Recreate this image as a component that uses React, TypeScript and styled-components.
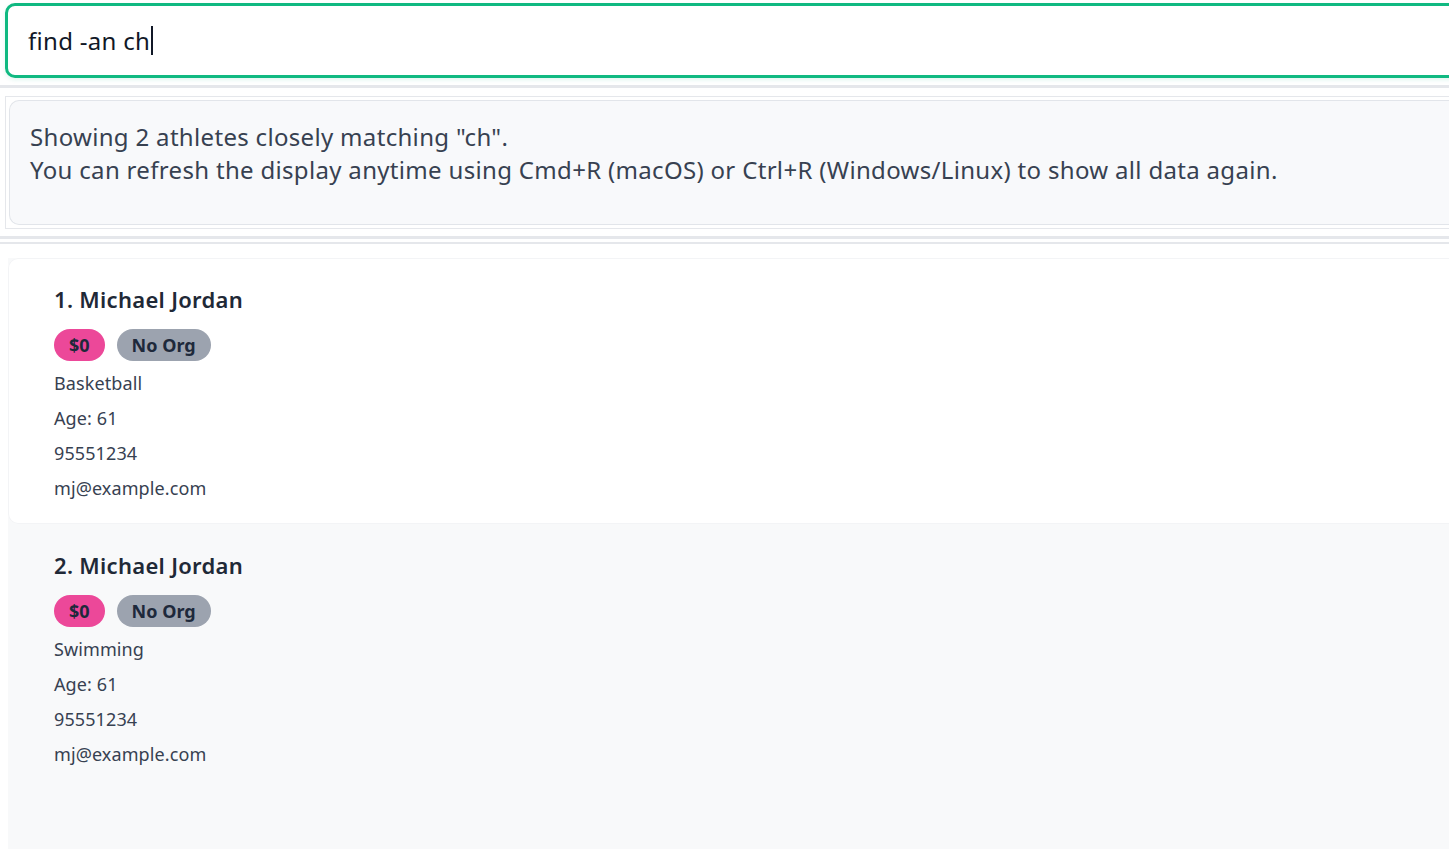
import React from "react";
import styled, { createGlobalStyle } from "styled-components";

const Global = createGlobalStyle`
  html, body {
    margin: 0;
    padding: 0;
    background: #ffffff;
    overflow: hidden;
  }
  body {
    font-family: "Noto Sans", "Open Sans", sans-serif;
    color: #1f2937;
  }
`;

const Page = styled.div`
  width: 1470px;
  height: 849px;
  display: flex;
  flex-direction: column;
`;

const CommandBox = styled.div`
  margin: 3px 0 0 5px;
  height: 69px;
  border: 3px solid #10b981;
  border-radius: 10px;
  background: #ffffff;
  box-shadow: 0 2px 4px rgba(16, 185, 129, 0.12);
  display: flex;
  align-items: center;
  padding-left: 20px;
  font-size: 24px;
  letter-spacing: 0.3px;
  color: #111827;
`;

const Caret = styled.span`
  display: inline-block;
  width: 2px;
  height: 29px;
  background: #111827;
  margin-left: 1px;
  vertical-align: middle;
`;

const Divider = styled.div<{ $top: number; $bottom: number; $thick?: number }>`
  height: ${(p) => p.$thick ?? 3}px;
  margin-top: ${(p) => p.$top}px;
  margin-bottom: ${(p) => p.$bottom}px;
  background: #e5e7eb;
`;

const ResultOuter = styled.div`
  margin-left: 5px;
  border: 1px solid #e5e7eb;
  border-right: none;
  padding: 3px 0 3px 3px;
  background: #ffffff;
`;

const ResultInner = styled.div`
  height: 84px;
  border: 1px solid #e2e5ea;
  border-right: none;
  border-radius: 10px 0 0 10px;
  background: #f8f9fb;
  padding: 19px 20px 20px 20px;
  font-size: 24px;
  line-height: 33px;
  letter-spacing: 0.32px;
  color: #374151;
`;

const List = styled.div`
  flex: 1;
  margin-left: 8px;
  background: #f8f9fa;
  display: flex;
  flex-direction: column;
`;

const Card = styled.div<{ $selected?: boolean }>`
  height: 266px;
  box-sizing: border-box;
  background: ${(p) => (p.$selected ? "#ffffff" : "transparent")};
  border-radius: ${(p) => (p.$selected ? "10px 0 0 10px" : "0")};
  ${(p) => (p.$selected ? "box-shadow: inset 0 0 0 1px #f3f4f6;" : "")}
  padding: 26px 0 0 46px;
  display: flex;
  flex-direction: column;
`;

const Name = styled.div`
  font-size: 22px;
  font-weight: 600;
  line-height: 30px;
  letter-spacing: 0.3px;
  color: #1f2937;
`;

const Badges = styled.div`
  display: flex;
  gap: 12px;
  margin-top: 15px;
  margin-bottom: 5px;
`;

const Badge = styled.span<{ $color: string }>`
  display: inline-flex;
  align-items: center;
  height: 32px;
  padding: 0 15px;
  border-radius: 16px;
  background: ${(p) => p.$color};
  color: #1e293b;
  font-size: 18px;
  font-weight: 700;
`;

const Info = styled.div`
  font-size: 18px;
  line-height: 35px;
  letter-spacing: 0.1px;
  color: #374151;
`;

type Athlete = {
  name: string;
  sport: string;
  age: number;
  phone: string;
  email: string;
};

const athletes: Athlete[] = [
  { name: "Michael Jordan", sport: "Basketball", age: 61, phone: "95551234", email: "mj@example.com" },
  { name: "Michael Jordan", sport: "Swimming", age: 61, phone: "95551234", email: "mj@example.com" },
];

export default function App() {
  return (
    <Page>
      <Global />
      <CommandBox>
        find -an ch
        <Caret />
      </CommandBox>
      <Divider $top={7} $bottom={8} />
      <ResultOuter>
        <ResultInner>
          Showing 2 athletes closely matching "ch".
          <br />
          You can refresh the display anytime using Cmd+R (macOS) or Ctrl+R (Windows/Linux) to show all data again.
        </ResultInner>
      </ResultOuter>
      <Divider $top={7} $bottom={3} />
      <Divider $top={0} $bottom={14} $thick={2} />
      <List>
        {athletes.map((a, i) => (
          <Card key={i} $selected={i === 0}>
            <Name>
              {i + 1}. {a.name}
            </Name>
            <Badges>
              <Badge $color="#ec4899">$0</Badge>
              <Badge $color="#9ca3af">No Org</Badge>
            </Badges>
            <Info>{a.sport}</Info>
            <Info>Age: {a.age}</Info>
            <Info>{a.phone}</Info>
            <Info>{a.email}</Info>
          </Card>
        ))}
      </List>
    </Page>
  );
}
